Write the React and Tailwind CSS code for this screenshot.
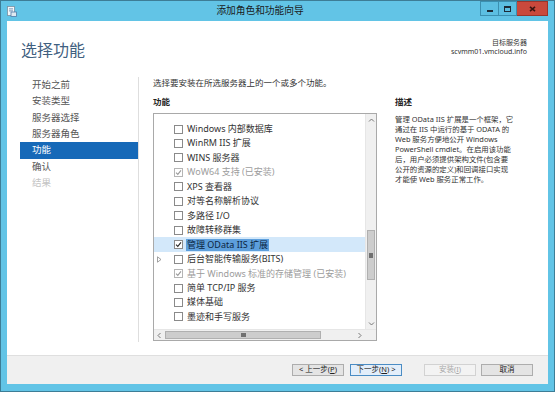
import React from 'react'

const NAV = [
  { label: '开始之前' },
  { label: '安装类型' },
  { label: '服务器选择' },
  { label: '服务器角色' },
  { label: '功能', active: true },
  { label: '确认' },
  { label: '结果', disabled: true },
]

const FEATURES = [
  { label: 'Windows 内部数据库' },
  { label: 'WinRM IIS 扩展' },
  { label: 'WINS 服务器' },
  { label: 'WoW64 支持 (已安装)', checked: true, disabled: true },
  { label: 'XPS 查看器' },
  { label: '对等名称解析协议' },
  { label: '多路径 I/O' },
  { label: '故障转移群集' },
  { label: '管理 OData IIS 扩展', checked: true, selected: true },
  { label: '后台智能传输服务(BITS)', expand: true },
  { label: '基于 Windows 标准的存储管理 (已安装)', checked: true, disabled: true },
  { label: '简单 TCP/IP 服务' },
  { label: '媒体基础' },
  { label: '墨迹和手写服务' },
]

const DESC = [
  '管理 OData IIS 扩展是一个框架，它',
  '通过在 IIS 中运行的基于 ODATA 的',
  'Web 服务方便地公开 Windows',
  'PowerShell cmdlet。在启用该功能',
  '后，用户必须提供架构文件(包含要',
  '公开的资源的定义)和回调接口实现',
  '才能使 Web 服务正常工作。',
]

function Checkbox({ checked, disabled }) {
  return (
    <span className={`w-[9px] h-[9px] shrink-0 border bg-white flex items-center justify-center ${disabled ? 'border-[#b5b5b5]' : 'border-[#8a8a8a]'}`}>
      {checked && (
        <svg width="7" height="7" viewBox="0 0 7 7" fill="none">
          <path d="M1 3.6L2.8 5.4L6 1.4" stroke={disabled ? '#9a9a9a' : '#2a2a2a'} strokeWidth="1.1" />
        </svg>
      )}
    </span>
  )
}

function Expander() {
  return (
    <svg width="5" height="7" viewBox="0 0 5 7" fill="none">
      <path d="M0.5 0.8L4 3.5L0.5 6.2z" stroke="#8a8a8a" strokeWidth="0.8" />
    </svg>
  )
}

function FeatureRow({ f }) {
  return (
    <div className={`h-[14.46px] flex items-center pl-[3px] ${f.selected ? 'bg-[#d3e8fa]' : ''}`}>
      <span className="w-[14px] flex items-center">{f.expand && <Expander />}</span>
      <span className="w-[3px]" />
      <Checkbox checked={f.checked} disabled={f.disabled} />
      <span
        className={`ml-[3px] whitespace-nowrap leading-[12px] px-[1px] ${
          f.selected ? 'bg-[#5d9fdc] text-[#0c2440]' : f.disabled ? 'text-[#9c9c9c]' : 'text-[#333]'
        }`}
      >
        {f.label}
      </span>
    </div>
  )
}

function Chevron({ dir }) {
  const d = {
    up: 'M1 4.5L3.5 2L6 4.5',
    down: 'M1 2.5L3.5 5L6 2.5',
    left: 'M4.5 1L2 3.5L4.5 6',
    right: 'M2.5 1L5 3.5L2.5 6',
  }[dir]
  return (
    <svg width="7" height="7" viewBox="0 0 7 7" fill="none">
      <path d={d} stroke="#6a6a6a" strokeWidth="0.9" />
    </svg>
  )
}

function WizButton({ children, variant }) {
  const styles = {
    normal: 'border-[#adadad] bg-[#e4e4e4] text-[#222]',
    focus: 'border-[#4a8cc4] bg-[#e3eefa] text-[#222]',
    disabled: 'border-[#d2d2d2] bg-[#f3f3f3] text-[#a8a8a8]',
  }[variant || 'normal']
  return (
    <div className={`w-[52px] h-[12px] border flex items-center justify-center text-[7.5px] leading-none whitespace-nowrap ${styles}`}>
      {children}
    </div>
  )
}

export default function App() {
  return (
    <div className="w-[557px] h-[394px] bg-white font-['Noto_Sans','Noto_Sans_CJK_SC',sans-serif]">
      <div className="w-[555px] h-[392px] border border-[#3d7d96] bg-[#62c4e6] flex flex-col">
        {/* title bar */}
        <div className="h-[20px] flex items-start shrink-0">
          <div className="pl-[6px] pt-[5px]">
            <svg width="10" height="11" viewBox="0 0 10 11">
              <rect x="0.5" y="0.5" width="7" height="9" fill="#f4f7fa" stroke="#7a8fa0" strokeWidth="0.8" />
              <rect x="2" y="2.5" width="4" height="0.8" fill="#5a7fa6" />
              <rect x="2" y="4.5" width="4" height="0.8" fill="#5a7fa6" />
              <rect x="4" y="6" width="5.5" height="4.5" fill="#dfe8f0" stroke="#4d7aa8" strokeWidth="0.8" />
            </svg>
          </div>
          <div className="flex-1 h-full flex items-center justify-center pl-[23px] text-[9.7px] text-[#1a1a1a]">
            添加角色和功能向导
          </div>
          <div className="flex pr-[6px]">
            <div className="w-[19px] h-[15px] border border-[#3b8fb0] bg-[#5cbfe2] flex items-end justify-center pb-[3px]">
              <span className="w-[6px] h-[2px] bg-[#1d2c38]" />
            </div>
            <div className="w-[18px] h-[15px] border border-l-0 border-[#3b8fb0] bg-[#5cbfe2] flex items-center justify-center">
              <span className="w-[7px] h-[6px] border border-t-2 border-[#1d2c38]" />
            </div>
            <div className="w-[31px] h-[15px] border border-l-0 border-[#9a352b] bg-[#c9493c] flex items-center justify-center">
              <svg width="7" height="6" viewBox="0 0 7 6">
                <path d="M1 0.8L6 5.2M6 0.8L1 5.2" stroke="#3a1512" strokeWidth="1.6" />
              </svg>
            </div>
          </div>
        </div>

        {/* client */}
        <div className="mx-[6px] h-[363px] bg-white flex flex-col shrink-0">
          <div className="h-[54px] shrink-0 flex justify-between pl-[14px] pr-[21px]">
            <div className="pt-[19px] text-[16px] leading-[20px] text-[#3f6080]">选择功能</div>
            <div className="pt-[17px] text-right text-[7px] leading-[9px] text-[#333]">
              <div>目标服务器</div>
              <div>scvmm01.vmcloud.info</div>
            </div>
          </div>

          <div className="flex-1 flex min-h-0">
            {/* steps */}
            <div className="w-[131px] pl-[13px] pt-[2px] shrink-0">
              {NAV.map(n => (
                <div
                  key={n.label}
                  className={`h-[16.33px] pl-[12px] flex items-center text-[9.5px] ${
                    n.active ? 'bg-[#1669b8] text-white' : n.disabled ? 'text-[#c4c4c4]' : 'text-[#555]'
                  }`}
                >
                  {n.label}
                </div>
              ))}
            </div>
            <div className="w-px bg-[#dedede] mt-[2px] mb-[13px]" />

            {/* main */}
            <div className="flex-1 pl-[14px] pt-[2px] flex flex-col">
              <div className="text-[8.5px] leading-[12px] text-[#333]">选择要安装在所选服务器上的一个或多个功能。</div>
              <div className="flex mt-[7px]">
                <div className="w-[224px] flex flex-col">
                  <div className="text-[8.5px] leading-[12px] font-bold text-[#222]">功能</div>
                  <div className="mt-[5px] h-[228px] border border-[#a9a9a9] flex flex-col">
                    <div className="flex-1 flex min-h-0">
                      <div className="flex-1 overflow-hidden text-[9px] pt-[7.8px]">
                        {FEATURES.map(f => (
                          <FeatureRow key={f.label} f={f} />
                        ))}
                      </div>
                      <div className="w-[11px] bg-[#f0f0f0] border-l border-[#e6e6e6] flex flex-col items-center">
                        <div className="h-[12px] flex items-center"><Chevron dir="up" /></div>
                        <div className="flex-1 w-full flex flex-col">
                          <div className="h-[104px]" />
                          <div className="h-[50px] mx-[1px] bg-[#cdcdcd] border border-[#b0b0b0] flex items-center justify-center">
                            <span className="w-[4px] h-[5px] bg-[#707070]" />
                          </div>
                        </div>
                        <div className="h-[12px] flex items-center"><Chevron dir="down" /></div>
                      </div>
                    </div>
                    <div className="h-[11px] flex shrink-0 border-t border-[#e6e6e6]">
                      <div className="flex-1 bg-[#f0f0f0] flex items-center">
                        <div className="w-[11px] flex justify-center"><Chevron dir="left" /></div>
                        <div className="w-[156px] h-[8px] bg-[#cdcdcd] border border-[#b0b0b0] flex items-center justify-center">
                          <span className="w-[5px] h-[4px] bg-[#707070]" />
                        </div>
                        <div className="flex-1" />
                        <div className="w-[11px] flex justify-center"><Chevron dir="right" /></div>
                      </div>
                      <div className="w-[11px] bg-[#f0f0f0]" />
                    </div>
                  </div>
                </div>

                <div className="ml-[18px] flex flex-col">
                  <div className="text-[8.5px] leading-[12px] font-bold text-[#222]">描述</div>
                  <div className="mt-[6px] text-[7.4px] leading-[10px] text-[#333] whitespace-nowrap">
                    {DESC.map(l => (
                      <div key={l}>{l}</div>
                    ))}
                  </div>
                </div>
              </div>
            </div>
          </div>

          {/* footer */}
          <div className="h-[29px] shrink-0 bg-[#f0f0f0] border-t border-[#dfdfdf] flex items-center justify-end pr-[15px]">
            <WizButton>&lt; 上一步(<u>P</u>)</WizButton>
            <div className="w-[6px]" />
            <WizButton variant="focus">下一步(<u>N</u>) &gt;</WizButton>
            <div className="w-[22px]" />
            <WizButton variant="disabled">安装(<u>I</u>)</WizButton>
            <div className="w-[5px]" />
            <WizButton>取消</WizButton>
          </div>
        </div>
      </div>
    </div>
  )
}
